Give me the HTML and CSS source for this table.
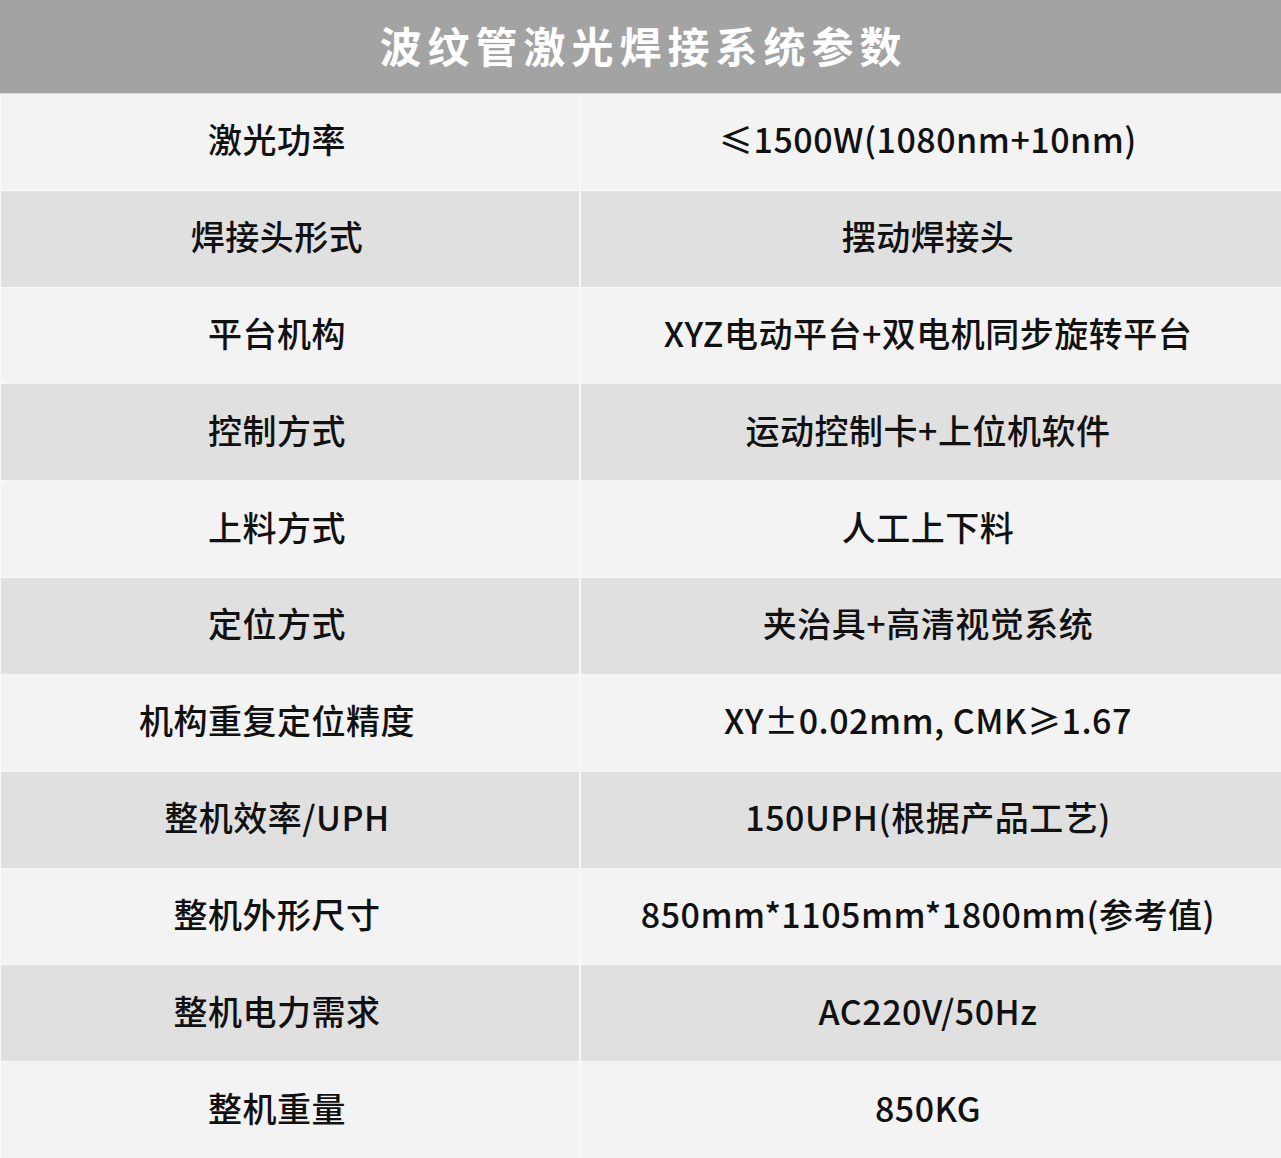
FILE: index.html
```html
<!DOCTYPE html>
<html lang="zh-CN">
<head>
<meta charset="utf-8">
<title>波纹管激光焊接系统参数</title>
<link rel="stylesheet" href="styles.css">
</head>
<body>
<div class="sheet">
  <div class="title">波纹管激光焊接系统参数</div>
  <div class="table">
    <div class="row light"><div class="key">激光功率</div><div class="val">≤1500W(1080nm+10nm)</div></div>
    <div class="row dark"><div class="key">焊接头形式</div><div class="val">摆动焊接头</div></div>
    <div class="row light"><div class="key">平台机构</div><div class="val">XYZ电动平台+双电机同步旋转平台</div></div>
    <div class="row dark"><div class="key">控制方式</div><div class="val">运动控制卡+上位机软件</div></div>
    <div class="row light"><div class="key">上料方式</div><div class="val">人工上下料</div></div>
    <div class="row dark"><div class="key">定位方式</div><div class="val">夹治具+高清视觉系统</div></div>
    <div class="row light"><div class="key">机构重复定位精度</div><div class="val">XY±0.02mm, CMK≥1.67</div></div>
    <div class="row dark"><div class="key">整机效率/UPH</div><div class="val">150UPH(根据产品工艺)</div></div>
    <div class="row light"><div class="key">整机外形尺寸</div><div class="val">850mm*1105mm*1800mm(参考值)</div></div>
    <div class="row dark"><div class="key">整机电力需求</div><div class="val">AC220V/50Hz</div></div>
    <div class="row light"><div class="key">整机重量</div><div class="val">850KG</div></div>
  </div>
</div>
</body>
</html>
```
FILE: styles.css
```css
html, body {
  margin: 0;
  padding: 0;
  background: #f4f4f4;
}
.sheet {
  width: 1281px;
  height: 1158px;
  display: flex;
  flex-direction: column;
  font-family: "Noto Sans CJK SC", "Noto Sans", sans-serif;
  color: #111;
}
.title {
  height: 94px;
  flex: none;
  box-sizing: border-box;
  padding-bottom: 4px;
  padding-left: 6px;
  background: #a3a3a3;
  color: #fff;
  font-weight: 700;
  font-size: 42px;
  letter-spacing: 6px;
  display: flex;
  align-items: center;
  justify-content: center;
  border-bottom: 1px solid #d6d6d6;
}
.table {
  flex: 1;
  display: grid;
  grid-template-rows: repeat(11, 1fr);
  background: #f8f8f8;
  padding-left: 1px;
  row-gap: 1px;
}
.row {
  display: grid;
  grid-template-columns: 578px 1fr;
  column-gap: 2px;
}
.key, .val {
  display: flex;
  align-items: center;
  justify-content: center;
  font-size: 34px;
  font-weight: 500;
  letter-spacing: 0.5px;
  padding-bottom: 6px;
}
.key {
  padding-right: 26px;
}
.val {
  padding-right: 6px;
}
.light .key, .light .val {
  background: #f3f3f3;
}
.dark .key, .dark .val {
  background: #e0e0e0;
}
```
